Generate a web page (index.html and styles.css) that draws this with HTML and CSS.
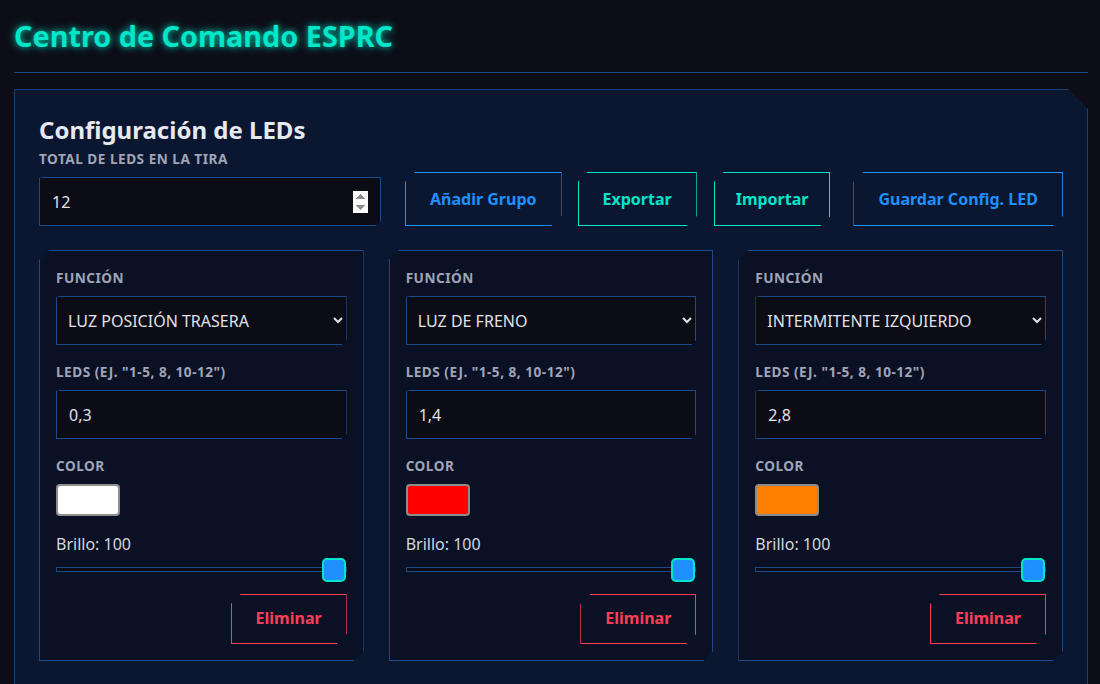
FILE: index.html
```html
<!DOCTYPE html>
<html lang="es">
<head>
<meta charset="utf-8">
<title>Centro de Comando ESPRC</title>
<link rel="stylesheet" href="styles.css">
</head>
<body>
<header class="top">
  <h1 class="title">Centro de Comando ESPRC</h1>
</header>
<main class="panel">
  <h2 class="panel-title">Configuración de LEDs</h2>
  <div class="toolbar">
    <div class="field total">
      <label class="label">Total de LEDs en la tira</label>
      <input class="input" type="number" value="12">
    </div>
    <button class="btn btn-blue add">Añadir Grupo</button>
    <button class="btn btn-cyan exp">Exportar</button>
    <button class="btn btn-cyan imp">Importar</button>
    <button class="btn btn-blue save">Guardar Config. LED</button>
  </div>
  <div class="groups">
    <section class="card">
      <div class="field">
        <label class="label">Función</label>
        <select class="input select"><option>LUZ POSICIÓN TRASERA</option></select>
      </div>
      <div class="field">
        <label class="label">LEDs (ej. "1-5, 8, 10-12")</label>
        <input class="input" type="text" value="0,3">
      </div>
      <div class="field">
        <label class="label">Color</label>
        <input class="swatch" type="color" value="#ffffff">
      </div>
      <div class="bright">Brillo: 100</div>
      <input class="range" type="range" min="0" max="100" value="100">
      <div class="actions"><button class="btn btn-red">Eliminar</button></div>
    </section>
    <section class="card">
      <div class="field">
        <label class="label">Función</label>
        <select class="input select"><option>LUZ DE FRENO</option></select>
      </div>
      <div class="field">
        <label class="label">LEDs (ej. "1-5, 8, 10-12")</label>
        <input class="input" type="text" value="1,4">
      </div>
      <div class="field">
        <label class="label">Color</label>
        <input class="swatch" type="color" value="#ff0000">
      </div>
      <div class="bright">Brillo: 100</div>
      <input class="range" type="range" min="0" max="100" value="100">
      <div class="actions"><button class="btn btn-red">Eliminar</button></div>
    </section>
    <section class="card">
      <div class="field">
        <label class="label">Función</label>
        <select class="input select"><option>INTERMITENTE IZQUIERDO</option></select>
      </div>
      <div class="field">
        <label class="label">LEDs (ej. "1-5, 8, 10-12")</label>
        <input class="input" type="text" value="2,8">
      </div>
      <div class="field">
        <label class="label">Color</label>
        <input class="swatch" type="color" value="#ff8000">
      </div>
      <div class="bright">Brillo: 100</div>
      <input class="range" type="range" min="0" max="100" value="100">
      <div class="actions"><button class="btn btn-red">Eliminar</button></div>
    </section>
  </div>
</main>
</body>
</html>
```

FILE: styles.css
```css
* { box-sizing: border-box; }
html, body { margin: 0; }
body {
  background: #0d0d17;
  color: #e0e3ea;
  font-family: "Noto Sans", "Open Sans", sans-serif;
  padding: 0 12px 0 14px;
}
.top {
  padding-top: 16px;
  padding-bottom: 16px;
  border-bottom: 1px solid #1a4a8a;
  margin-bottom: 16px;
}
.title {
  margin: 0;
  font-size: 28.8px;
  line-height: 40px;
  font-weight: 700;
  color: #00e6c8;
  text-shadow: 0 0 6px rgba(0, 230, 200, 0.75), 0 0 12px rgba(0, 230, 200, 0.35);
}
.panel {
  background: #0b1730;
  border: 1px solid #1a3f72;
  padding: 24px 24px 24px;
  clip-path: polygon(0 0, calc(100% - 20px) 0, 100% 20px, 100% 100%, 0 100%);
}
.panel-title {
  margin: 0 0 3px;
  font-size: 24px;
  line-height: 31px;
  font-weight: 700;
  color: #e6e9f0;
}
.toolbar {
  display: flex;
  align-items: flex-end;
  margin-bottom: 24px;
}
.field { margin-bottom: 16px; }
.toolbar .field { margin-bottom: 0; }
.total { width: 342px; flex: none; }
.label {
  display: block;
  font-size: 13.6px;
  line-height: 21px;
  font-weight: 700;
  letter-spacing: 0.5px;
  text-transform: uppercase;
  color: #a0a4b8;
  margin-bottom: 8px;
}
.input {
  display: block;
  width: 100%;
  height: 49px;
  padding: 12px 12px;
  font-family: "Noto Sans", sans-serif;
  font-size: 16px;
  color: #e0e2e8;
  background: #0c0c16;
  border: 1px solid #1a4a8a;
  border-radius: 0;
  outline: none;
  clip-path: polygon(4px 0, 100% 0, 100% calc(100% - 5px), calc(100% - 5px) 100%, 0 100%, 0 1px);
}
.input::-webkit-inner-spin-button { opacity: 1; }
.select { padding: 0 8px 0 7px; }
.btn {
  font-family: "Noto Sans", sans-serif;
  font-size: 16px;
  line-height: 22px;
  font-weight: 700;
  background: transparent;
  border: 1px solid;
  padding: 12px 24px;
  cursor: pointer;
  clip-path: polygon(10px 0, 100% 0, 100% calc(100% - 10px), calc(100% - 10px) 100%, 0 100%, 0 10px);
}
.toolbar .btn { padding: 15px 24px; flex: none; }
.toolbar .imp { padding: 15px 21px; }
.btn-blue { color: #1e90ff; border-color: #1e90ff; }
.btn-cyan { color: #00e6c8; border-color: #00e6c8; }
.btn-red { color: #ff3d57; border-color: #ff3d57; padding: 12px 24px 14px; }
.add { margin-left: 24px; }
.exp { margin-left: 16px; }
.imp { margin-left: 17px; }
.save { margin-left: 23px; }
.groups {
  display: grid;
  grid-template-columns: repeat(3, 1fr);
  gap: 25px;
}
.card {
  background: #0a1124;
  border: 1px solid #1a4a8a;
  padding: 16px 16px 16px;
  clip-path: polygon(10px 0, 100% 0, 100% calc(100% - 10px), calc(100% - 10px) 100%, 0 100%, 0 10px);
}
.swatch {
  display: block;
  -webkit-appearance: none;
  appearance: none;
  width: 64px;
  height: 32px;
  padding: 0;
  border: none;
  background: transparent;
}
.swatch::-webkit-color-swatch-wrapper { padding: 0; }
.swatch::-webkit-color-swatch {
  border: 2px solid #8c8c8c;
  border-radius: 4px;
}
.bright {
  font-size: 16px;
  line-height: 24px;
  color: #d4d7de;
  margin-bottom: 2px;
}
.range {
  display: block;
  -webkit-appearance: none;
  appearance: none;
  width: 100%;
  height: 5px;
  margin: 11px 0 22px;
  background: #0c0c16;
  border: 1px solid #1a4a8a;
  outline: none;
}
.range::-webkit-slider-thumb {
  -webkit-appearance: none;
  appearance: none;
  width: 24px;
  height: 24px;
  border-radius: 5px;
  background: #1e90ff;
  border: 2px solid #00e6c8;
}
.actions { display: flex; justify-content: flex-end; }
```
